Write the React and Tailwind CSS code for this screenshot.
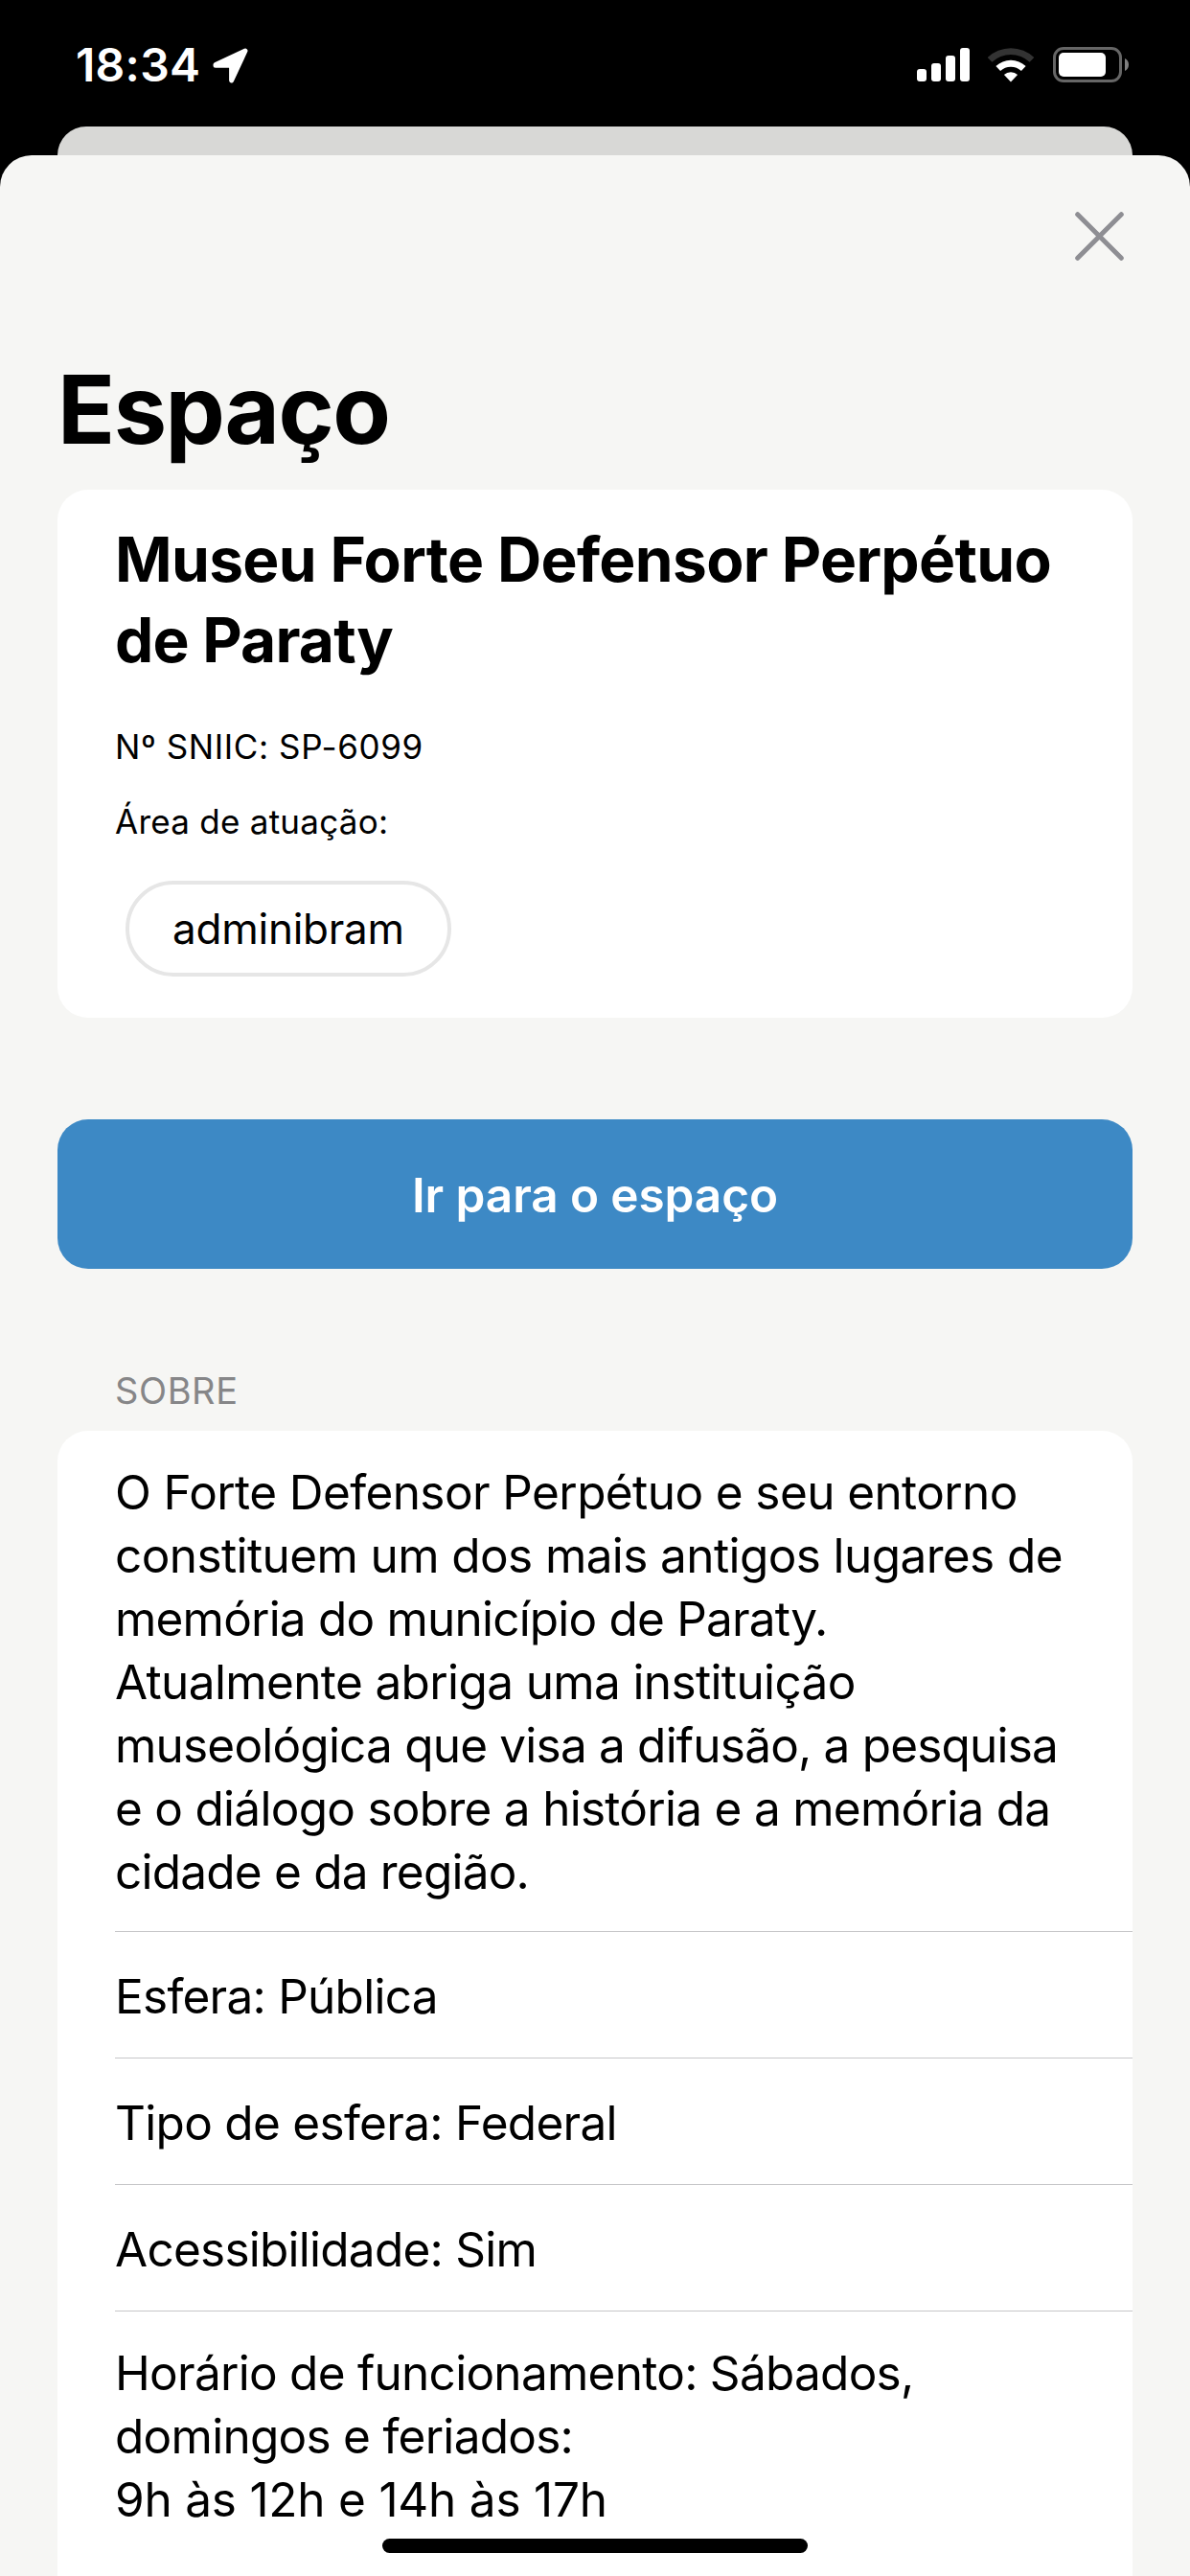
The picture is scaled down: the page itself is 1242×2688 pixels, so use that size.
const about = [
  { text: 'O Forte Defensor Perpétuo e seu entorno', tracking: 'tracking-[-0.6px]' },
  { text: 'constituem um dos mais antigos lugares de', tracking: 'tracking-[-0.6px]' },
  { text: 'memória do município de Paraty.', tracking: 'tracking-[-0.8px]' },
  { text: 'Atualmente abriga uma instituição', tracking: 'tracking-[-0.63px]' },
  { text: 'museológica que visa a difusão, a pesquisa', tracking: 'tracking-[-0.8px]' },
  { text: 'e o diálogo sobre a história e a memória da', tracking: 'tracking-[-0.72px]' },
  { text: 'cidade e da região.', tracking: 'tracking-[-0.79px]' },
]

const details = [
  { text: 'Esfera: Pública', tracking: 'tracking-[-0.75px]' },
  { text: 'Tipo de esfera: Federal', tracking: 'tracking-[-0.7px]' },
  { text: 'Acessibilidade: Sim', tracking: 'tracking-[-0.75px]' },
]

const hours = [
  { text: 'Horário de funcionamento: Sábados,', tracking: 'tracking-[-0.73px]' },
  { text: 'domingos e feriados:', tracking: 'tracking-[-0.73px]' },
  { text: '9h às 12h e 14h às 17h', tracking: 'tracking-[-0.22px]' },
]

function Lines({ items }) {
  return items.map(({ text, tracking }) => (
    <span key={text} className={`block whitespace-nowrap ${tracking}`}>{text}</span>
  ))
}

function LocationArrow() {
  return (
    <svg width="38" height="38" viewBox="222 50 38 38" className="shrink-0">
      <path d="M225 67.4 256 53 241.6 84V68.2H225Z" fill="white" stroke="white" strokeWidth="5" strokeLinejoin="round" />
    </svg>
  )
}

function Signal() {
  return (
    <svg width="55" height="35" viewBox="0 0 55 35" fill="white">
      <rect x="0" y="22" width="10" height="13" rx="3" />
      <rect x="15" y="16" width="10" height="19" rx="3" />
      <rect x="30" y="8" width="10" height="27" rx="3" />
      <rect x="45" y="0" width="10" height="35" rx="3" />
    </svg>
  )
}

function Wifi() {
  return (
    <svg width="50" height="36" viewBox="0 0 50 36">
      <path d="M0.7 9.9A35.3 35.3 0 0 1 49.3 9.9L44.6 14.8A28.5 28.5 0 0 0 5.4 14.8Z" fill="#333333" />
      <path d="M9.4 19A22.7 22.7 0 0 1 40.6 19L35.9 24A15.8 15.8 0 0 0 14.1 24Z" fill="white" />
      <path d="M17.9 28A10.3 10.3 0 0 1 32.1 28L25 35.5Z" fill="white" />
    </svg>
  )
}

function Battery() {
  return (
    <svg width="80" height="38" viewBox="0 0 80 38">
      <rect x="1.5" y="1.5" width="69" height="34" rx="9.5" fill="none" stroke="#666666" strokeWidth="3" />
      <rect x="6" y="6" width="49" height="25" rx="5" fill="white" />
      <path d="M75 12C77.4 13 79 15.5 79 18.5S77.4 24 75 25Z" fill="#808080" />
    </svg>
  )
}

export default function App() {
  return (
    <div className="relative flex h-[2688px] w-[1242px] flex-col overflow-hidden bg-black font-[Inter,sans-serif] text-black">
      <header className="flex h-[132px] shrink-0 items-start pl-[79px] pr-[63px] text-white">
        <div className="mt-[38px] text-[48px] font-[580] leading-[60px] tracking-[0.3px]">18:34</div>
        <div className="ml-[13px] mt-[50px]"><LocationArrow /></div>
        <div className="ml-auto mt-[50px] flex items-start">
          <Signal />
          <div className="ml-[18px]"><Wifi /></div>
          <div className="-mt-px ml-[19px]"><Battery /></div>
        </div>
      </header>

      <div className="mx-[60px] h-[30px] shrink-0 rounded-t-[30px] bg-[#d8d8d6]" />

      <main className="flex grow flex-col rounded-t-[33px] bg-[#f6f6f4] px-[60px]">
        <div className="flex h-[205px] shrink-0 justify-end pt-[58px]">
          <button aria-label="Fechar" className="mr-[6px] h-[56px] w-[56px]">
            <svg width="56" height="56" viewBox="0 0 56 56" className="block">
              <path d="M4.7 3.7 50.3 49.3M50.3 3.7 4.7 49.3" stroke="#8e8e93" strokeWidth="5" strokeLinecap="round" />
            </svg>
          </button>
        </div>

        <h1 className="text-[99px] font-bold leading-[120px] tracking-[-1.5px]">Espaço</h1>

        <section className="mt-[24px] h-[551px] shrink-0 rounded-[32px] bg-white px-[60px] pt-[31px]">
          <h2 className="whitespace-nowrap text-[64px] font-bold leading-[84px]">
            <span className="block tracking-[-0.66px]">Museu Forte Defensor Perpétuo</span>
            <span className="block tracking-[-0.8px]">de Paraty</span>
          </h2>
          <p className="mt-[45px] text-[35px] leading-[48px] tracking-[0.6px]">Nº SNIIC: SP-6099</p>
          <p className="mt-[30px] text-[35px] leading-[48px] tracking-[0.26px]">Área de atuação:</p>
          <div className="ml-[11px] mt-[38px] flex h-[100px] w-[340px] items-center justify-center rounded-full border-4 border-[#e6e6e6] text-[44px] tracking-[-0.25px]">
            adminibram
          </div>
        </section>

        <button className="mt-[106px] h-[156px] shrink-0 rounded-[32px] bg-[#3d89c5] pt-[2px] text-[49.5px] font-[580] tracking-[-0.1px] text-white">
          Ir para o espaço
        </button>

        <h3 className="mb-[17px] ml-[60px] mt-[102px] text-[38px] leading-[50px] tracking-[0.6px] text-[#868688]">SOBRE</h3>

        <section className="grow rounded-t-[32px] bg-white pl-[60px] text-[49.5px] leading-[66px]">
          <p className="border-b border-[#c6c6c8] pb-[29px] pt-[31px]"><Lines items={about} /></p>
          {details.map((row) => (
            <p key={row.text} className="h-[132px] border-b border-[#c6c6c8] pt-[34px]"><Lines items={[row]} /></p>
          ))}
          <p className="pt-[31px]"><Lines items={hours} /></p>
        </section>
      </main>

      <div className="absolute bottom-[24px] left-[399px] h-[15px] w-[444px] rounded-full bg-black" />
    </div>
  )
}
